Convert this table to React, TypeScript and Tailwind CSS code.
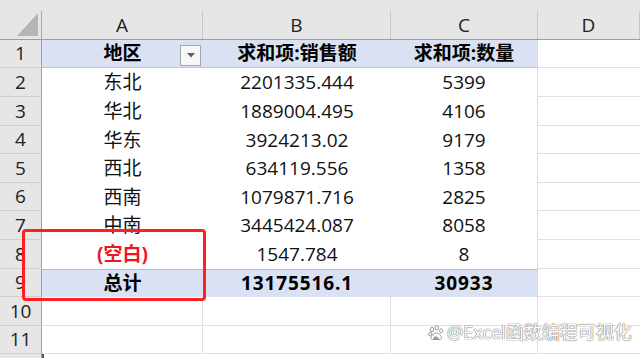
import React from "react";

const FONT = { fontFamily: '"Open Sans","Noto Sans CJK SC",sans-serif' };

type Row = {
  n: number;
  h: string;
  kind: "head" | "data" | "blank" | "total" | "empty";
  a?: string;
  b?: string;
  c?: string;
};

const rows: Row[] = [
  { n: 1, h: "h-[28px]", kind: "head", a: "地区", b: "求和项:销售额", c: "求和项:数量" },
  { n: 2, h: "h-[29px]", kind: "data", a: "东北", b: "2201335.444", c: "5399" },
  { n: 3, h: "h-[29px]", kind: "data", a: "华北", b: "1889004.495", c: "4106" },
  { n: 4, h: "h-[28px]", kind: "data", a: "华东", b: "3924213.02", c: "9179" },
  { n: 5, h: "h-[29px]", kind: "data", a: "西北", b: "634119.556", c: "1358" },
  { n: 6, h: "h-[28px]", kind: "data", a: "西南", b: "1079871.716", c: "2825" },
  { n: 7, h: "h-[29px]", kind: "data", a: "中南", b: "3445424.087", c: "8058" },
  { n: 8, h: "h-[29px]", kind: "blank", a: "(空白)", b: "1547.784", c: "8" },
  { n: 9, h: "h-[28px]", kind: "total", a: "总计", b: "13175516.1", c: "30933" },
  { n: 10, h: "h-[29px]", kind: "empty" },
  { n: 11, h: "h-[28px]", kind: "empty" },
];

function cellCls(kind: Row["kind"]) {
  switch (kind) {
    case "head":
      return "bg-[#d9e1f2] border-b border-b-[#b4c6e7] font-bold text-black";
    case "total":
      return "bg-[#d9e1f2] border-t border-t-[#a9bde3] font-bold text-black";
    case "empty":
      return "bg-white border-b border-b-[#e1e1e1] border-r border-r-[#e1e1e1]";
    default:
      return "bg-white";
  }
}

function Paw() {
  return (
    <svg width="16" height="16" viewBox="0 0 16 16" className="mr-[3px]">
      <g fill="#fff" stroke="#9a9a9a" strokeWidth="1">
        <ellipse cx="4" cy="4.5" rx="1.7" ry="2.2" />
        <ellipse cx="8.8" cy="2.8" rx="1.7" ry="2.2" />
        <ellipse cx="13.2" cy="5.8" rx="1.6" ry="2" />
        <ellipse cx="2.2" cy="9" rx="1.5" ry="1.9" />
        <path d="M4.5 14.5c-1.6 0-2-1.5-1-3 1.2-1.8 2.5-3.5 5-3.5s3.6 1.8 4.6 3.4c1 1.6.3 3.1-1.3 3.1z" />
      </g>
      <text x="8" y="13.6" fontSize="4" textAnchor="middle" fill="#9a9a9a" fontFamily="Liberation Sans, sans-serif">du</text>
    </svg>
  );
}

export default function App() {
  return (
    <div className="relative w-[640px] h-[358px] overflow-hidden bg-white text-[#111]" style={FONT}>
      {/* column headers */}
      <div className="flex h-[40px] bg-[#e6e6e6] border-b border-b-[#9e9e9e]">
        <div className="relative w-[42px] shrink-0">
          <div className="absolute bottom-0 right-0 h-[28px] border-r border-r-[#a8a8a8]" />
          <svg className="absolute left-[17px] top-[13px]" width="21" height="23" viewBox="0 0 21 23">
            <polygon points="21,0 21,23 0,23" fill="#b5b5b5" />
          </svg>
        </div>
        {[
          ["A", "w-[161px]"],
          ["B", "w-[188px]"],
          ["C", "w-[147px]"],
          ["D", "flex-1"],
        ].map(([l, w]) => (
          <div key={l} className={`${w} shrink-0 self-end h-[28px] flex items-center justify-center text-[19px] text-[#222] border-r border-r-[#c6c6c6]`}>
            {l}
          </div>
        ))}
      </div>

      {rows.map((r) => {
        const c = cellCls(r.kind);
        const num = r.kind === "total" ? "tracking-[0.9px]" : "";
        return (
          <div key={r.n} className={`flex ${r.h}`}>
            <div className="w-[42px] shrink-0 bg-[#e6e6e6] border-r border-r-[#a0a0a0] border-b border-b-[#d0d0d0] flex items-center justify-center text-[19px] text-[#222]">
              {r.n}
            </div>
            <div className={`relative w-[161px] shrink-0 flex items-center justify-center text-[19px] ${c} ${r.kind === "blank" ? "text-[#f0141e] font-bold" : ""}`}>
              {r.a}
              {r.kind === "head" && (
                <div className="absolute right-[2px] top-[5px] w-[21px] h-[21px] bg-[#f7f7f7] border border-[#a6a6a6] flex items-center justify-center">
                  <svg width="8" height="5" viewBox="0 0 8 5">
                    <polygon points="0,0 8,0 4,4.5" fill="#606060" />
                  </svg>
                </div>
              )}
            </div>
            <div className={`w-[188px] shrink-0 flex items-center justify-center text-[19px] ${c} ${num}`}>{r.b}</div>
            <div className={`w-[147px] shrink-0 flex items-center justify-center text-[19px] ${c} ${num} border-r border-r-[#dcdcdc]`}>{r.c}</div>
            <div className="flex-1 bg-white border-b border-b-[#e1e1e1]" />
          </div>
        );
      })}
      <div className="flex h-[4px]">
        <div className="w-[42px] shrink-0 bg-[#e6e6e6] border-r border-r-[#a0a0a0]" />
        <div className="w-[2px] bg-[#217346]" />
        <div className="flex-1 bg-white" />
      </div>

      {/* red highlight box */}
      <div className="absolute left-[22px] top-[229px] w-[184px] h-[72px] border-[3px] border-[#ff1f1f] rounded-[4px]" />

      {/* watermark */}
      <div className="absolute left-[428px] top-[319px] flex items-center text-[18px] text-white [text-shadow:0_0_1px_#808080,0_0_1px_#808080,0_0_1px_#808080]">
        <Paw />
        <span>@Excel函数编程可视化</span>
      </div>
    </div>
  );
}
